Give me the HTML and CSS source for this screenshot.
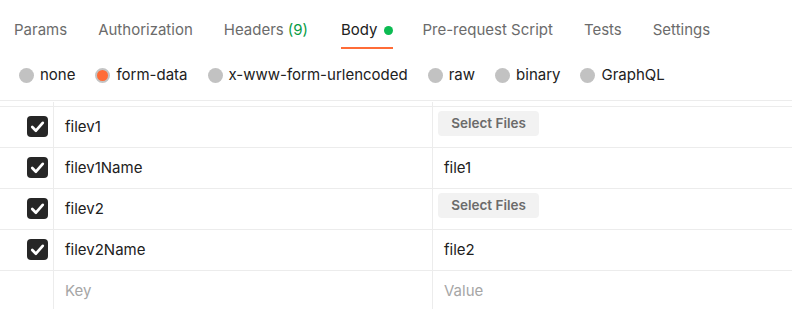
FILE: index.html
```html
<!DOCTYPE html>
<html>
<head>
<meta charset="utf-8">
<link rel="stylesheet" href="styles.css">
</head>
<body>
<div class="page">
  <nav class="tabs">
    <div class="tab">Params</div>
    <div class="tab">Authorization</div>
    <div class="tab">Headers <span class="count">(9)</span></div>
    <div class="tab active">Body <span class="dot"></span></div>
    <div class="tab">Pre-request Script</div>
    <div class="tab">Tests</div>
    <div class="tab">Settings</div>
  </nav>
  <div class="modes">
    <label class="mode"><span class="radio"></span>none</label>
    <label class="mode"><span class="radio on"></span>form-data</label>
    <label class="mode"><span class="radio"></span>x-www-form-urlencoded</label>
    <label class="mode"><span class="radio"></span>raw</label>
    <label class="mode"><span class="radio"></span>binary</label>
    <label class="mode"><span class="radio"></span>GraphQL</label>
  </div>
  <div class="table">
    <div class="row head">
      <div class="c-check"></div><div class="c-key"></div><div class="c-val"></div>
    </div>
    <div class="row">
      <div class="c-check"><span class="cb"><svg viewBox="0 0 20 20"><path d="M5 10.5 L8.5 14 L15 6.5" /></svg></span></div>
      <div class="c-key">filev1</div>
      <div class="c-val"><button class="btn">Select Files</button></div>
    </div>
    <div class="row">
      <div class="c-check"><span class="cb"><svg viewBox="0 0 20 20"><path d="M5 10.5 L8.5 14 L15 6.5" /></svg></span></div>
      <div class="c-key">filev1Name</div>
      <div class="c-val text">file1</div>
    </div>
    <div class="row">
      <div class="c-check"><span class="cb"><svg viewBox="0 0 20 20"><path d="M5 10.5 L8.5 14 L15 6.5" /></svg></span></div>
      <div class="c-key">filev2</div>
      <div class="c-val"><button class="btn">Select Files</button></div>
    </div>
    <div class="row">
      <div class="c-check"><span class="cb"><svg viewBox="0 0 20 20"><path d="M5 10.5 L8.5 14 L15 6.5" /></svg></span></div>
      <div class="c-key">filev2Name</div>
      <div class="c-val text">file2</div>
    </div>
    <div class="row last">
      <div class="c-check"></div>
      <div class="c-key ph">Key</div>
      <div class="c-val text ph">Value</div>
    </div>
  </div>
</div>
</body>
</html>
```

FILE: styles.css
```css
html, body {
  margin: 0;
  padding: 0;
  background: #ffffff;
}
body {
  font-family: Inter, "Noto Sans", sans-serif;
  font-size: 15px;
  color: #212121;
  overflow: hidden;
}
.page {
  width: 792px;
  height: 309px;
  overflow: hidden;
}
.tabs {
  display: flex;
  gap: 31px;
  padding-left: 14px;
}
.tab {
  padding-top: 20px;
  padding-bottom: 7px;
  line-height: 20px;
  color: #6b6b6b;
  border-bottom: 2px solid transparent;
  display: flex;
  align-items: center;
  white-space: nowrap;
}
.tab .count {
  color: #0a9c45;
  margin-left: 4px;
}
.tab.active {
  color: #212121;
  border-bottom-color: #ff6c37;
  margin-left: 2px;
  margin-right: -2px;
}
.dot {
  width: 9px;
  height: 9px;
  border-radius: 50%;
  background: #0cbb52;
  margin-left: 7px;
}
.modes {
  display: flex;
  margin-top: 16px;
  padding-left: 19px;
  gap: 20px;
  height: 20px;
  line-height: 20px;
}
.mode {
  display: flex;
  align-items: center;
  white-space: nowrap;
  color: #212121;
}
.radio {
  width: 15px;
  height: 15px;
  border-radius: 50%;
  background: #c2c2c2;
  margin-right: 6px;
  box-sizing: border-box;
}
.radio.on {
  background: #ff6c37;
  border: 2px solid #c4c4c4;
}
.table {
  margin-top: 15px;
  border-top: 1px solid #ececec;
}
.row {
  display: flex;
  height: 40px;
  border-bottom: 1px solid #ececec;
}
.row.head {
  height: 4px;
  margin-top: 1px;
}
.row.last {
  border-bottom: none;
}
.c-check {
  width: 54px;
  flex: none;
  display: flex;
  align-items: center;
  padding-left: 27px;
  box-sizing: border-box;
  border-right: 1px solid #ececec;
}
.c-key {
  width: 379px;
  flex: none;
  box-sizing: border-box;
  padding-left: 11px;
  padding-bottom: 2px;
  display: flex;
  align-items: center;
  border-right: 1px solid #ececec;
}
.c-val {
  flex: 1;
  padding-left: 5px;
  display: flex;
  align-items: center;
}
.c-val.text {
  padding-left: 11px;
  padding-bottom: 2px;
}
.ph {
  color: #a6a6a6;
}
.cb {
  width: 21px;
  height: 21px;
  border-radius: 4px;
  background: #262626;
  display: block;
  margin-top: -1px;
}
.cb svg {
  width: 21px;
  height: 21px;
  display: block;
}
.cb path {
  fill: none;
  stroke: #ffffff;
  stroke-width: 2.6;
  stroke-linecap: round;
  stroke-linejoin: round;
}
.btn {
  font-family: Inter, "Noto Sans", sans-serif;
  font-size: 13.5px;
  font-weight: 600;
  color: #6b6b6b;
  background: #f2f2f2;
  border: none;
  border-radius: 4px;
  width: 101px;
  height: 25px;
  padding: 0;
  margin-top: -8px;
}
```
